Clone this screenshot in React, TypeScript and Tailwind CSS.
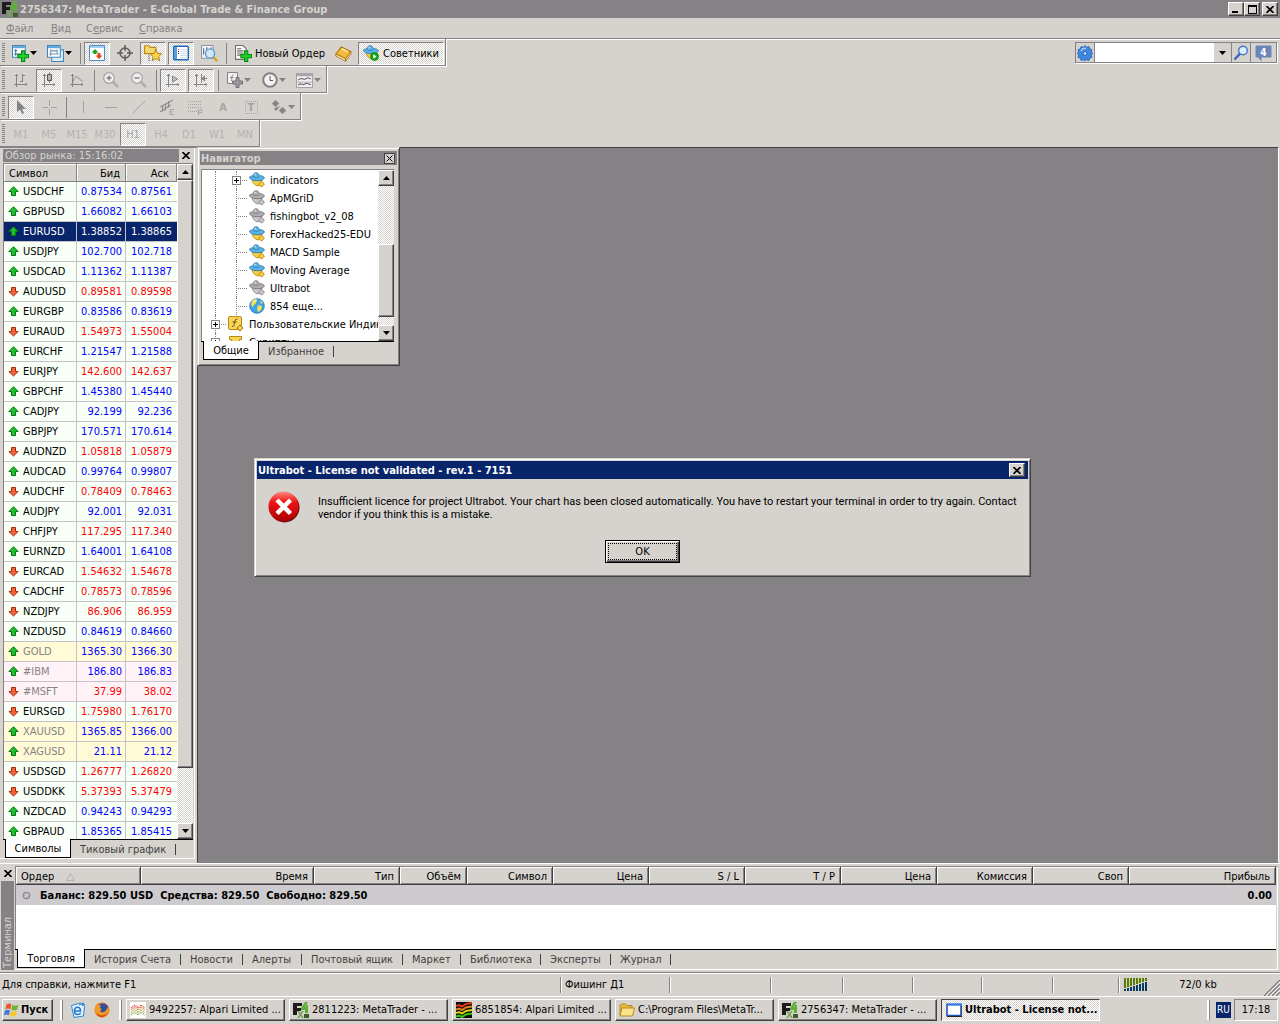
import type { ReactNode } from "react";

const CHECKER = "bg-[repeating-conic-gradient(#ffffff_0_25%,#d6d3ce_0_50%)] bg-[length:2px_2px]";
const RAISED =
  "bg-[#d6d3ce] border border-t-white border-l-white border-r-[#424142] border-b-[#424142] shadow-[inset_-1px_-1px_0_#848284]";

type Quote = { symbol: string; bid: string; ask: string; up: boolean; kind?: "metal" | "stock" };

const QUOTES: Quote[] = [
  { symbol: "USDCHF", bid: "0.87534", ask: "0.87561", up: true },
  { symbol: "GBPUSD", bid: "1.66082", ask: "1.66103", up: true },
  { symbol: "EURUSD", bid: "1.38852", ask: "1.38865", up: true },
  { symbol: "USDJPY", bid: "102.700", ask: "102.718", up: true },
  { symbol: "USDCAD", bid: "1.11362", ask: "1.11387", up: true },
  { symbol: "AUDUSD", bid: "0.89581", ask: "0.89598", up: false },
  { symbol: "EURGBP", bid: "0.83586", ask: "0.83619", up: true },
  { symbol: "EURAUD", bid: "1.54973", ask: "1.55004", up: false },
  { symbol: "EURCHF", bid: "1.21547", ask: "1.21588", up: true },
  { symbol: "EURJPY", bid: "142.600", ask: "142.637", up: false },
  { symbol: "GBPCHF", bid: "1.45380", ask: "1.45440", up: true },
  { symbol: "CADJPY", bid: "92.199", ask: "92.236", up: true },
  { symbol: "GBPJPY", bid: "170.571", ask: "170.614", up: true },
  { symbol: "AUDNZD", bid: "1.05818", ask: "1.05879", up: false },
  { symbol: "AUDCAD", bid: "0.99764", ask: "0.99807", up: true },
  { symbol: "AUDCHF", bid: "0.78409", ask: "0.78463", up: false },
  { symbol: "AUDJPY", bid: "92.001", ask: "92.031", up: true },
  { symbol: "CHFJPY", bid: "117.295", ask: "117.340", up: false },
  { symbol: "EURNZD", bid: "1.64001", ask: "1.64108", up: true },
  { symbol: "EURCAD", bid: "1.54632", ask: "1.54678", up: false },
  { symbol: "CADCHF", bid: "0.78573", ask: "0.78596", up: false },
  { symbol: "NZDJPY", bid: "86.906", ask: "86.959", up: false },
  { symbol: "NZDUSD", bid: "0.84619", ask: "0.84660", up: true },
  { symbol: "GOLD", bid: "1365.30", ask: "1366.30", up: true, kind: "metal" },
  { symbol: "#IBM", bid: "186.80", ask: "186.83", up: true, kind: "stock" },
  { symbol: "#MSFT", bid: "37.99", ask: "38.02", up: false, kind: "stock" },
  { symbol: "EURSGD", bid: "1.75980", ask: "1.76170", up: false },
  { symbol: "XAUUSD", bid: "1365.85", ask: "1366.00", up: true, kind: "metal" },
  { symbol: "XAGUSD", bid: "21.11", ask: "21.12", up: true, kind: "metal" },
  { symbol: "USDSGD", bid: "1.26777", ask: "1.26820", up: false },
  { symbol: "USDDKK", bid: "5.37393", ask: "5.37479", up: false },
  { symbol: "NZDCAD", bid: "0.94243", ask: "0.94293", up: true },
  { symbol: "GBPAUD", bid: "1.85365", ask: "1.85415", up: true },
];

const EXPERTS = [
  { name: "indicators", on: true },
  { name: "ApMGriD", on: false },
  { name: "fishingbot_v2_08", on: false },
  { name: "ForexHacked25-EDU", on: true },
  { name: "MACD Sample", on: true },
  { name: "Moving Average", on: true },
  { name: "Ultrabot", on: false },
];

const ORDER_COLUMNS = [
  { label: "Время", width: "w-[173px]" },
  { label: "Тип", width: "w-[86px]" },
  { label: "Объём", width: "w-[67px]" },
  { label: "Символ", width: "w-[86px]" },
  { label: "Цена", width: "w-[96px]" },
  { label: "S / L", width: "w-[96px]" },
  { label: "T / P", width: "w-[96px]" },
  { label: "Цена", width: "w-[96px]" },
  { label: "Комиссия", width: "w-[96px]" },
  { label: "Своп", width: "w-[96px]" },
  { label: "Прибыль", width: "" },
];

const TERMINAL_TABS = [
  { label: "История Счета", width: "w-[96px]" },
  { label: "Новости", width: "w-[62px]" },
  { label: "Алерты", width: "w-[59px]" },
  { label: "Почтовый ящик", width: "w-[101px]" },
  { label: "Маркет", width: "w-[58px]" },
  { label: "Библиотека", width: "w-[80px]" },
  { label: "Эксперты", width: "w-[70px]" },
  { label: "Журнал", width: "w-[60px]" },
];

/* ---------- icons ---------- */

function Icon({ children, size = 16 }: { children: ReactNode; size?: number }) {
  return (
    <svg width={size} height={size} viewBox="0 0 16 16" fill="none" className="shrink-0" aria-hidden="true">
      {children}
    </svg>
  );
}

function Plus({ color = "#1ed02a", edge = "#078a10" }: { color?: string; edge?: string }) {
  return <path d="M9 5.500h3v3.500h3.500v3H12v3.500H9V12H5.500V9H9z" fill={color} stroke={edge} />;
}

function NewChartIcon() {
  return (
    <Icon size={17}>
      <path d="M.5.5h12v11H.5z" fill="#fff" stroke="#3d86bd" />
      <path d="M1 1h11v2H1z" fill="#5fa8dc" />
      <path d="M3.500 4.500V10M2 8.500h8M2.500 5.500l1-1 1 1" stroke="#41719c" />
      <Plus />
    </Icon>
  );
}

function ProfilesIcon() {
  return (
    <Icon size={17}>
      <path d="M4.500 4.500h11v11h-11z" fill="#d9ecfa" stroke="#3d86bd" />
      <path d="M.5.5h12v11H.5z" fill="#fff" stroke="#3d86bd" />
      <path d="M1 1h11v2H1z" fill="#5fa8dc" />
      <path d="M3.500 4v6M2 8.500h9M9.500 4v4M3 5.500h7" stroke="#6f93b5" />
    </Icon>
  );
}

function MarketWatchIcon() {
  return (
    <Icon>
      <path d="M.5.5h15v15H.5z" fill="#fff" stroke="#4a90d0" />
      <path d="M1 1h14v2H1z" fill="#a5cff0" />
      <path d="M6 4l3.500 3.500h-2V9h-3V7.500h-2z" fill="#19a319" />
      <path d="M10 14l3.500-3.500h-2V8h-3v2.500h-2z" fill="#e04a1a" />
    </Icon>
  );
}

function CrosshairIcon() {
  return (
    <Icon>
      <circle cx="8" cy="8" r="5" stroke="#5c5c5c" strokeWidth="1.500" />
      <path d="M8 0v6M8 10v6M0 8h6M10 8h6" stroke="#5c5c5c" strokeWidth="1.500" />
    </Icon>
  );
}

function StarFolderIcon() {
  return (
    <Icon size={18}>
      <path d="M.5 8.500v-7h4l1 1.500h5v5.500z" fill="#f7d96b" stroke="#b98a16" />
      <path d="M4.500 10v5" stroke="#555" strokeDasharray="1 1" />
      <path d="M10.500 5l1.600 3.400 3.600.3-2.700 2.500.9 3.700-3.400-2-3.200 2 .8-3.700-2.700-2.500 3.600-.3z" fill="#ffd64a" stroke="#a9770b" strokeWidth=".8" />
    </Icon>
  );
}

function TerminalIcon() {
  return (
    <Icon>
      <rect x=".7" y="1.200" width="14.600" height="13.600" rx="1" fill="#fff" stroke="#1d66b8" strokeWidth="1.400" />
      <path d="M1 2h3v12H1z" fill="#5b9cdf" />
      <path d="M7 4.500h7M7 6.500h7M7 8.500h7M7 10.500h7M7 12.500h7" stroke="#cfdbe8" />
      <path d="M5 4h1v1H5z" fill="#e01818" />
      <path d="M5 6h1v1H5zM5 8h1v1H5z" fill="#222" />
    </Icon>
  );
}

function TesterIcon() {
  return (
    <Icon size={17}>
      <path d="M.5.5h11v12H.5z" fill="#f4f6f8" stroke="#8a97a5" />
      <path d="M2.500 3v6M5.500 2v5M9.500 2v3" stroke="#51606f" />
      <circle cx="8.500" cy="8" r="4.300" fill="#cfe6f8" stroke="#5a9bd5" strokeWidth="1.300" />
      <path d="M11.800 11.500l3.500 3.800" stroke="#d9a21f" strokeWidth="2.400" />
    </Icon>
  );
}

function NewOrderIcon() {
  return (
    <Icon size={17}>
      <path d="M.5.5h7l3 3v10H.5z" fill="#fff" stroke="#6c6c6c" />
      <path d="M2 3.500h4M2 5.500h6M2 7.500h6M2 9.500h4" stroke="#666" />
      <Plus />
    </Icon>
  );
}

function BookIcon() {
  return (
    <Icon size={17}>
      <path d="M.8 8.500L6 1.800l9 4.500-5 6.700z" fill="#f4bb3c" stroke="#a96f08" />
      <path d="M.8 8.500v2L10 15.200V13zM10 15.200l5-6.500V6.300L10 13z" fill="#fff0c4" stroke="#a96f08" strokeWidth=".8" />
      <path d="M6.500 3.500l5.500 2.800" stroke="#ffe7a0" strokeWidth="1.500" />
    </Icon>
  );
}

function HatIcon({ on = true, badge = false }: { on?: boolean; badge?: boolean }) {
  const hat = on ? "#5db4e4" : "#b0aeb0";
  const hatEdge = on ? "#2878ae" : "#737173";
  const face = on ? "#f7cf45" : "#c9c7c9";
  const faceEdge = on ? "#b88410" : "#848284";
  return (
    <Icon>
      <path d="M3 7.500l10 .5c0 3-1.500 5.500-4 6C6 13.500 3.500 11 3 7.500z" fill={face} stroke={faceEdge} strokeWidth=".8" />
      <path d="M.5 5c1.500-1.200 3-1 3.500-1 .3-2 1.300-3.200 3-3.200s2.900 1 3.200 2.900c2.300 0 4.800.5 5.200 2.300-1 2-3.900 2.700-6.900 2.700C5 8.700 1 8 .5 5z" fill={hat} stroke={hatEdge} strokeWidth=".9" />
      <path d="M4 4.500c1.500 1.500 5 1.500 6.200 0" stroke={hatEdge} strokeWidth=".8" />
      <path d="M5.500 3.300c.2-.8.7-1.200 1.500-1.300" stroke="#fff" strokeOpacity=".8" />
      {badge ? (
        <>
          <circle cx="11.500" cy="11.500" r="4" fill="#18a818" stroke="#087808" strokeWidth=".7" />
          <path d="M10.300 9.300l3.200 2.200-3.200 2.200z" fill="#fff" />
        </>
      ) : (
        <path d="M12.500 9.300l2.900 2.900-2.900 2.900-2.900-2.900z" fill={face} stroke={faceEdge} />
      )}
    </Icon>
  );
}

const GRAY = "#848284";
const PALE = "#a5a2a5";

function AxesIcon({ kind }: { kind: "bars" | "candle" | "line" | "scroll" | "shift" }) {
  return (
    <Icon>
      <path d="M3.500 2v13M1 12.500h13M2 3.500h3M13 11v3" stroke={GRAY} />
      {kind === "bars" && <path d="M9.500 2v8M7 9.500h2M10 3.500h2" stroke={GRAY} />}
      {kind === "candle" && (
        <>
          <path d="M8.500 0v11" stroke={GRAY} />
          <path d="M6.500 2.500h4v6h-4z" fill="#b5b2b5" stroke="#5a5a5a" />
        </>
      )}
      {kind === "line" && <path d="M4 9.500C6 4 8 4 9.500 6s2.500 2 4 3" stroke={GRAY} />}
      {kind === "scroll" && <path d="M7.500 4v6l5-3z" fill="#c6c3c6" stroke={GRAY} />}
      {kind === "shift" && <path d="M8.500 2v9M14 6.500H9M11.500 4L9 6.500 11.500 9z" fill={GRAY} stroke={GRAY} />}
    </Icon>
  );
}

function ZoomIcon({ plus = false }: { plus?: boolean }) {
  return (
    <Icon>
      <circle cx="6" cy="6" r="5.300" fill="#f0eff0" stroke="#a5a2a5" strokeWidth="1.200" />
      <path d="M10 10l5 5" stroke="#b0aeb0" strokeWidth="2.600" />
      <path d={plus ? "M3.500 6h5M6 3.500v5" : "M3.500 6h5"} stroke="#7b797b" strokeWidth="1.400" />
    </Icon>
  );
}

function IndicatorsIcon() {
  return (
    <Icon>
      <path d="M.5.5h10v11H.5z" fill="#f1f0f1" stroke={GRAY} />
      <path d="M6.500 3C4.500 3 5 5 4.500 9M3 5.500h3.500" stroke={GRAY} />
      <Plus color="#9c9a9c" edge="#737173" />
    </Icon>
  );
}

function ClockIcon() {
  return (
    <Icon>
      <circle cx="8" cy="8" r="6.800" fill="#f3f2f3" stroke={GRAY} strokeWidth="2" />
      <path d="M8 4v4.500h3" stroke="#5a5a5a" />
    </Icon>
  );
}

function TemplateIcon() {
  return (
    <Icon size={17}>
      <path d="M.5 1.500h15v13H.5z" fill="#f1f0f1" stroke={PALE} />
      <path d="M1 2h14v2H1z" fill="#a5a2a5" />
      <path d="M2 7.500l3-1.500 3 1 3-1.500 3 1M2 12.500L4 11l3 1 3-1.500 4 1.500" stroke="#6b696b" />
      <path d="M1 9.500h14" stroke="#b5b2b5" />
    </Icon>
  );
}

function DrawIcon({ kind }: { kind: string }) {
  return (
    <Icon>
      {kind === "cursor" && <path d="M4 1v12l3-2.500L9 15l2-1-2-4h4z" fill={GRAY} />}
      {kind === "cross" && <path d="M8.500 1v6M8.500 10v6M1 8.500h6M10 8.500h6" stroke={PALE} />}
      {kind === "vline" && <path d="M8.500 2v12" stroke={PALE} />}
      {kind === "hline" && <path d="M2 8.500h12" stroke={PALE} />}
      {kind === "trend" && <path d="M2 14L14 2" stroke={PALE} />}
      {kind === "channel" && (
        <>
          <path d="M1 8L14 1M1 13l11-7M4 6l-1 7M7 4l-1 8M10 2L9 9" stroke={GRAY} />
          <path d="M15 10.500h-4v5h4M11 13h3" stroke={PALE} />
        </>
      )}
      {kind === "fibo" && (
        <>
          <path d="M1 2.500h14M1 5.500h14M1 8.500h14M1 12.500h9" stroke={PALE} strokeDasharray="1 1" />
          <path d="M11.500 16v-5H16M12 13.500h3" stroke={PALE} />
        </>
      )}
      {kind === "arrows" && (
        <path d="M4.500 1L8 4.500 4.500 8 1 4.500zM11.500 8l3.500 3.500-3.500 3.500L8 11.500zM3 9.500L5 12l4-5" fill={GRAY} stroke={PALE} strokeWidth=".7" />
      )}
    </Icon>
  );
}

function QuoteArrow({ up }: { up: boolean }) {
  return (
    <svg width="11" height="11" viewBox="0 0 11 11" className="shrink-0" aria-hidden="true">
      {up ? (
        <path d="M5.500.7l4.600 4.800H7.500v4h-4v-4H.9z" fill="#1fc02f" stroke="#08750f" />
      ) : (
        <path d="M5.500 10l4.600-4.500H7.500v-4h-4v4H.9z" fill="#f2633a" stroke="#a92a08" />
      )}
    </svg>
  );
}

function TerminalLogo() {
  return (
    <svg width="16" height="16" viewBox="0 0 16 16" className="shrink-0" aria-hidden="true">
      <path d="M0 1h9v3H4v2h4v3H4v4H0z" fill="#1c1c1c" />
      <path d="M12 0h3l-3 5h1V3h2v8h-3V8H8V6z" fill="#5fae35" />
      <path d="M4 9h2l1.500 2L9 9h2l-2.500 3.500L11 16H9l-1.500-2L6 16H4l2.500-3.500z" fill="#79a55c" />
      <path d="M11 12h5v4h-5z" fill="#3f5c2c" />
    </svg>
  );
}

function GearIcon() {
  return (
    <Icon>
      <path
        d="M8 .6l1.700 1.600 2.300-.6.7 2.300 2.300.7-.6 2.300L16 8.500l-1.600 1.700.6 2.300-2.300.6-.7 2.300-2.300-.6L8 16l-1.700-1.200-2.300.6-.7-2.300-2.300-.6.6-2.300L0 8.500l1.600-1.600L1 4.600l2.300-.7.7-2.300 2.300.6z"
        fill="#3f87de"
        stroke="#2462b4"
        strokeWidth=".8"
        strokeLinejoin="round"
      />
      <path d="M4 6c1-2 3-3 5-2.500" stroke="#a8d0f8" strokeWidth="1.500" />
      <circle cx="8" cy="8.500" r="1.900" fill="#cfe4fa" stroke="#1f5cb0" />
    </Icon>
  );
}

function SearchIcon() {
  return (
    <Icon>
      <circle cx="10" cy="5.500" r="4.300" fill="#dcecfb" stroke="#4a78c8" strokeWidth="1.400" />
      <path d="M7 8.700l-5.500 5.800" stroke="#3a66c0" strokeWidth="2.400" />
    </Icon>
  );
}

function MessagesIcon() {
  return (
    <svg width="17" height="16" viewBox="0 0 17 16" aria-hidden="true">
      <path d="M1 1h15v11H6v3.500L3.500 12H1z" fill="#6b86b8" stroke="#6b86b8" strokeLinejoin="round" />
      <text x="8.500" y="10.500" textAnchor="middle" fontSize="10" fontWeight="bold" fill="#fff">
        4
      </text>
    </svg>
  );
}

function GlobeIcon() {
  return (
    <Icon>
      <circle cx="8" cy="8" r="7.300" fill="#3fa3ea" stroke="#1d74b8" strokeWidth=".8" />
      <path d="M3 3c2-2 4-2 5-1L7 5 5 7 4 9 2 7zM9 7l4 1-1 4-3 2-1-3zM11 2l3 3-2 1z" fill="#f5e04e" />
      <path d="M4 4c1-1.500 2.500-2 4-2" stroke="#fff" strokeOpacity=".7" />
    </Icon>
  );
}

function FunctionIcon() {
  return (
    <Icon>
      <rect x=".5" y=".5" width="13" height="13" rx="1.500" fill="#f8d45a" stroke="#b88a18" />
      <path d="M9.500 3C7 2.500 7 5 6.500 7S6 11 4 10.500M4.500 6h4" stroke="#6b4a00" />
      <path d="M12 9l3 3-3 3-3-3z" fill="#f7cf45" stroke="#a97508" />
    </Icon>
  );
}

function ScrollIcon() {
  return (
    <Icon>
      <path d="M1.500 2.500h12v3h-2v9h-8v-9h-2z" fill="#f8d45a" stroke="#b88a18" />
      <path d="M5 7.500h5M5 9.500h5" stroke="#b88a18" />
    </Icon>
  );
}

function ErrorIcon() {
  return (
    <svg width="32" height="32" viewBox="0 0 32 32" className="shrink-0" aria-hidden="true">
      <defs>
        <linearGradient id="err" x1="0" y1="0" x2="0" y2="1">
          <stop offset="0" stopColor="#ff8a84" />
          <stop offset=".35" stopColor="#f01414" />
          <stop offset="1" stopColor="#a80000" />
        </linearGradient>
      </defs>
      <circle cx="16.500" cy="16.500" r="15" fill="#6b1010" />
      <circle cx="15.500" cy="15.500" r="15" fill="url(#err)" />
      <path d="M9 9l13.500 13.500M22.500 9L9 22.500" stroke="#fff" strokeWidth="4.500" />
    </svg>
  );
}

function StartIcon() {
  return (
    <Icon>
      <path d="M2.500 2.500c2-1.500 3.500-1.300 5 0L6.300 7.300c-1.500-1-3-1-5 0z" fill="#e8562a" />
      <path d="M8.500 3c2 1.200 4 1 6-.2l-1.300 4.800c-2 1.200-4 1.200-6 .2z" fill="#6fb52c" />
      <path d="M1 8.500c2-1 3.500-1 5 0l-1.200 4.800c-1.500-1-3-1-5 0z" fill="#3f78d8" />
      <path d="M7 9c2 1 4 1 6 0l-1.300 4.800c-2 1.200-4 1-6 0z" fill="#f7c52c" />
    </Icon>
  );
}

function BrowserIcon() {
  return (
    <Icon>
      <path d="M1.500 3.500l9-2.500 4 3-1 10L4 15.500z" fill="#e8f4ff" stroke="#2d84d0" />
      <path d="M4.500 9h6c0-2.500-1-3.700-3-3.700S4.500 7 4.500 9s1.300 3.500 3.200 3.500 2.600-.8 3-1.700" stroke="#1f78d0" strokeWidth="1.600" />
      <path d="M9 3l5-2M12 4l3-2" stroke="#1f78d0" />
    </Icon>
  );
}

function FirefoxIcon() {
  return (
    <Icon>
      <circle cx="8" cy="8" r="7.500" fill="#e8741a" />
      <circle cx="9" cy="6.500" r="5" fill="#2b4fa3" />
      <path d="M1 5c1-2 1.500-3 2.500-4l.5 2c1 0 2 .3 3 1L5.500 6 8 7 6 9c1.500 2 5 1.500 6.500-1.500L14 5c2 4-.5 10-6 10.500C3 15.500 0 10 1 5z" fill="#f39a22" />
      <path d="M2 10c2 4 7 5 11 1-2 5-9 6-11-1z" fill="#c93c10" />
    </Icon>
  );
}

function WaveIcon({ dark = false }: { dark?: boolean }) {
  return (
    <Icon>
      <path d="M0 0h16v16H0z" fill={dark ? "#0a0a0a" : "#fff"} />
      <g strokeWidth={dark ? "2" : "1.500"} strokeDasharray={dark ? undefined : "1 1"}>
        <path d={dark ? "M0 4l3-1 3 1.500L10 2l6-1" : "M1 6l4-3 3 3 3-3 4 3"} stroke={dark ? "#e03818" : "#d84a40"} />
        <path d={dark ? "M0 7.500l3-1L6 8l4-2.500 6-1" : "M1 8l4-3 3 3 3-3 4 3"} stroke={dark ? "#e08018" : "#d88040"} />
        <path d={dark ? "M0 11l3-1 3 1.500L10 9l6-1" : "M1 10.500l4-3 3 3 3-3 4 3"} stroke={dark ? "#d8d018" : "#a8a848"} />
        <path d={dark ? "M0 14.500l3-1L6 15l4-2.500 6-1" : "M1 13l4-3 3 3 3-3 4 3"} stroke={dark ? "#40c818" : "#78a848"} />
      </g>
    </Icon>
  );
}

function FolderIcon() {
  return (
    <Icon>
      <path d="M1 13V3.500L2.500 2h4L8 3.500h5V13z" fill="#e8b93c" stroke="#b8881c" />
      <path d="M1 14l2-8h12.500l-2 8z" fill="#fbe58a" stroke="#b8881c" />
    </Icon>
  );
}

function WindowIcon() {
  return (
    <Icon>
      <path d="M1 2.500h14v11H1z" fill="#fff" stroke="#1d58b8" strokeWidth="1.600" />
      <path d="M0 1.500h16v2H0z" fill="#2d7be0" />
      <path d="M1 14.500h15V4" stroke="#222" />
    </Icon>
  );
}

/* ---------- shared controls ---------- */

function Caret({ up = false, color = "#000000" }: { up?: boolean; color?: string }) {
  return (
    <svg width="7" height="4" viewBox="0 0 7 4" className="shrink-0" aria-hidden="true">
      <path d={up ? "M0 4h7L3.500 0z" : "M0 0h7L3.500 4z"} fill={color} />
    </svg>
  );
}

function CloseGlyph() {
  return (
    <svg width="8" height="7" viewBox="0 0 8 7" className="shrink-0" aria-hidden="true">
      <path d="M.5 0l7 7M7.500 0l-7 7" stroke="#000" strokeWidth="1.600" />
    </svg>
  );
}

function Toolbar({ width, children }: { width: string; children: ReactNode }) {
  return (
    <div
      role="toolbar"
      className={`flex h-[27px] items-center gap-0.5 border-r border-b border-[#848284] pt-0.5 pl-0.5 shadow-[1px_1px_0_#fff] ${width}`}
    >
      <span className="mr-px h-5 w-[3px] shrink-0 bg-[repeating-linear-gradient(#848284_0_1px,transparent_1px_2px)]" />
      {children}
    </div>
  );
}

function Tool({ label, pressed, children }: { label: string; pressed?: boolean; children: ReactNode }) {
  return (
    <button
      type="button"
      aria-label={label}
      className={`flex h-[23px] w-[26px] shrink-0 items-center justify-center border ${
        pressed ? `border-t-[#848284] border-r-white border-b-white border-l-[#848284] ${CHECKER}` : "border-transparent"
      }`}
    >
      {children}
    </button>
  );
}

function DropTool({ label, caret, children }: { label: string; caret?: string; children: ReactNode }) {
  return (
    <button type="button" aria-label={label} className="flex h-[23px] w-[33px] shrink-0 items-center justify-end gap-px pr-1">
      {children}
      <Caret color={caret} />
    </button>
  );
}

function ToolSeparator() {
  return (
    <span className="flex h-[21px] w-1 shrink-0 justify-center">
      <span className="w-px bg-[#848284]" />
    </span>
  );
}

function ScrollBar({ thumb }: { thumb: string }) {
  return (
    <div className={`flex w-4 shrink-0 flex-col ${CHECKER}`}>
      <button type="button" aria-label="Вверх" className={`flex h-4 shrink-0 items-center justify-center ${RAISED}`}>
        <Caret up />
      </button>
      <div className="flex min-h-0 flex-1 flex-col">
        <div className={`${thumb} ${RAISED}`} />
      </div>
      <button type="button" aria-label="Вниз" className={`flex h-4 shrink-0 items-center justify-center ${RAISED}`}>
        <Caret />
      </button>
    </div>
  );
}

function Tabs({ active, width, children }: { active: string; width: string; children: ReactNode }) {
  return (
    <div className="flex h-[19px] shrink-0 border-t border-black pl-0.5 text-[#424142]">
      <button type="button" className={`-mt-px border border-t-0 border-black bg-white text-black ${width}`}>
        {active}
      </button>
      {children}
    </div>
  );
}

function Tab({ label, width }: { label: string; width: string }) {
  return (
    <button type="button" className={`flex shrink-0 items-center justify-between pl-[9px] whitespace-nowrap ${width}`}>
      {label}
      <span className="h-[11px] w-px bg-[#424142]" />
    </button>
  );
}

/* ---------- window parts ---------- */

function TitleBar() {
  return (
    <header className="flex h-[18px] shrink-0 items-center gap-0.5 bg-[#848284] pr-0.5 pl-0.5 text-[#d6d3ce]">
      <TerminalLogo />
      <h1 className="flex-1 font-bold">2756347: MetaTrader - E-Global Trade &amp; Finance Group</h1>
      <div className="flex">
        <button type="button" aria-label="Свернуть" className={`flex h-3.5 w-4 items-end pb-0.5 pl-[3px] ${RAISED}`}>
          <span className="h-0.5 w-1.5 bg-black" />
        </button>
        <button type="button" aria-label="Развернуть" className={`flex h-3.5 w-4 items-center justify-center ${RAISED}`}>
          <span className="h-[9px] w-[9px] border border-t-2 border-black" />
        </button>
        <button type="button" aria-label="Закрыть" className={`ml-0.5 flex h-3.5 w-4 items-center justify-center ${RAISED}`}>
          <CloseGlyph />
        </button>
      </div>
    </header>
  );
}

function MenuBar() {
  return (
    <nav className="flex h-[21px] shrink-0 items-center border-b border-[#848284] pl-1.5 text-[#848284] shadow-[0_1px_0_#fff]">
      <button type="button" className="w-[45px] text-left"><u>Ф</u>айл</button>
      <button type="button" className="w-[35px] text-left"><u>В</u>ид</button>
      <button type="button" className="w-[53px] text-left">С<u>е</u>рвис</button>
      <button type="button" className="text-left"><u>С</u>правка</button>
    </nav>
  );
}

function Toolbars() {
  return (
    <div className="flex shrink-0 items-start justify-between">
      <div>
        <Toolbar width="w-[446px]">
          <DropTool label="Новый график"><NewChartIcon /></DropTool>
          <DropTool label="Профили"><ProfilesIcon /></DropTool>
          <ToolSeparator />
          <Tool label="Обзор рынка" pressed><MarketWatchIcon /></Tool>
          <Tool label="Окно данных"><CrosshairIcon /></Tool>
          <Tool label="Навигатор" pressed><StarFolderIcon /></Tool>
          <Tool label="Терминал" pressed><TerminalIcon /></Tool>
          <Tool label="Тестер"><TesterIcon /></Tool>
          <ToolSeparator />
          <button type="button" className="flex h-[23px] w-[98px] shrink-0 items-center gap-[3px] pl-[5px] whitespace-nowrap">
            <NewOrderIcon />
            Новый Ордер
          </button>
          <Tool label="MetaEditor"><BookIcon /></Tool>
          <button
            type="button"
            aria-pressed="true"
            className={`flex h-[23px] w-[86px] shrink-0 items-center gap-1 border border-t-[#848284] border-r-white border-b-white border-l-[#848284] pl-1 ${CHECKER}`}
          >
            <HatIcon badge />
            Советники
          </button>
        </Toolbar>
        <Toolbar width="w-[327px]">
          <Tool label="Бары"><AxesIcon kind="bars" /></Tool>
          <Tool label="Свечи" pressed><AxesIcon kind="candle" /></Tool>
          <Tool label="Линия"><AxesIcon kind="line" /></Tool>
          <ToolSeparator />
          <Tool label="Увеличить"><ZoomIcon plus /></Tool>
          <Tool label="Уменьшить"><ZoomIcon /></Tool>
          <ToolSeparator />
          <Tool label="Автопрокрутка" pressed><AxesIcon kind="scroll" /></Tool>
          <Tool label="Сдвиг графика" pressed><AxesIcon kind="shift" /></Tool>
          <ToolSeparator />
          <DropTool label="Индикаторы" caret="#848284"><IndicatorsIcon /></DropTool>
          <DropTool label="Периоды" caret="#848284"><ClockIcon /></DropTool>
          <DropTool label="Шаблоны" caret="#848284"><TemplateIcon /></DropTool>
        </Toolbar>
        <Toolbar width="w-[301px]">
          <Tool label="Курсор" pressed><DrawIcon kind="cursor" /></Tool>
          <Tool label="Перекрестие"><DrawIcon kind="cross" /></Tool>
          <ToolSeparator />
          <Tool label="Вертикальная линия"><DrawIcon kind="vline" /></Tool>
          <Tool label="Горизонтальная линия"><DrawIcon kind="hline" /></Tool>
          <Tool label="Трендовая линия"><DrawIcon kind="trend" /></Tool>
          <Tool label="Канал"><DrawIcon kind="channel" /></Tool>
          <Tool label="Фибоначчи"><DrawIcon kind="fibo" /></Tool>
          <Tool label="Текст"><span className="font-bold text-[#a5a2a5]">A</span></Tool>
          <Tool label="Метка">
            <span className="flex h-[13px] w-[13px] items-center justify-center border border-dotted border-[#a5a2a5] font-bold text-[#a5a2a5]">T</span>
          </Tool>
          <DropTool label="Стрелки" caret="#848284"><DrawIcon kind="arrows" /></DropTool>
        </Toolbar>
        <Toolbar width="w-[260px]">
          {["M1", "M5", "M15", "M30", "H1", "H4", "D1", "W1", "MN"].map((period) => (
            <Tool key={period} label={period} pressed={period === "H1"}>
              <span className={period === "H1" ? "text-[#a5a2a5]" : "text-[#b5b2b5]"}>{period}</span>
            </Tool>
          ))}
        </Toolbar>
      </div>
      <div className="mt-[3px] mr-[3px] flex h-[21px] border border-[#848284] shadow-[1px_1px_0_#fff]">
        <button type="button" aria-label="Настройки" className="flex w-[19px] items-center justify-center border-r border-[#848284]">
          <GearIcon />
        </button>
        <input aria-label="Поиск" className="w-[119px] bg-white px-1 outline-none" />
        <button type="button" aria-label="История поиска" className="flex w-[18px] items-center justify-center border-r border-[#848284]">
          <Caret />
        </button>
        <button type="button" aria-label="Найти" className="flex w-[19px] items-center justify-center border-r border-[#848284]">
          <SearchIcon />
        </button>
        <button type="button" aria-label="Сообщения" className="flex w-[25px] items-center justify-center">
          <MessagesIcon />
        </button>
      </div>
    </div>
  );
}

function QuoteRow({ quote, selected }: { quote: Quote; selected: boolean }) {
  const price = selected ? "text-white" : quote.up ? "text-[#0000ff]" : "text-[#ff0000]";
  const tint = selected
    ? "bg-[#08246b] text-white"
    : quote.kind === "metal"
      ? "bg-[#fffbd6] text-[#848284]"
      : quote.kind === "stock"
        ? "bg-[#fff3f7] text-[#848284]"
        : "bg-[#f7fff7] text-black";
  return (
    <tr className={`h-5 ${tint}`}>
      <td className="border-r border-b border-[#c6c3c6] p-0 pl-1">
        <span className="flex items-center gap-1">
          <QuoteArrow up={quote.up} />
          {quote.symbol}
        </span>
      </td>
      <td className={`border-r border-b border-[#c6c3c6] p-0 pr-[3px] text-right ${price}`}>{quote.bid}</td>
      <td className={`border-b border-[#c6c3c6] p-0 pr-[5px] text-right ${price}`}>{quote.ask}</td>
    </tr>
  );
}

function MarketWatch() {
  const head = "border-r border-b border-[#848284] p-0 font-normal shadow-[inset_1px_1px_0_#fff]";
  return (
    <aside className="flex w-[197px] shrink-0 flex-col border-t border-[#848284] pr-0.5 pb-1">
      <div className="flex min-h-0 flex-1 flex-col border-r border-b border-white pr-px pl-[3px]">
        <div className="flex h-[15px] shrink-0 items-center">
          <h2 className="h-[13px] w-[176px] bg-[#848284] pl-0.5 text-[#d6d3ce]">Обзор рынка: 15:16:02</h2>
          <button type="button" aria-label="Закрыть" className="flex flex-1 justify-center">
            <CloseGlyph />
          </button>
        </div>
        <div className="flex min-h-0 flex-1 overflow-hidden border-t border-l border-[#848284]">
          <div className="flex-1 overflow-hidden">
            <table className="w-full table-fixed border-separate border-spacing-0">
              <thead>
                <tr className="h-[18px]">
                  <th className={`w-[73px] pt-0.5 pl-[5px] text-left ${head}`}>Символ</th>
                  <th className={`w-[49px] pt-0.5 pr-[5px] text-right ${head}`}>Бид</th>
                  <th className={`pt-0.5 pr-[7px] text-right ${head}`}>Аск</th>
                </tr>
              </thead>
              <tbody>
                {QUOTES.map((quote) => (
                  <QuoteRow key={quote.symbol} quote={quote} selected={quote.symbol === "EURUSD"} />
                ))}
              </tbody>
            </table>
          </div>
          <ScrollBar thumb="h-[588px]" />
        </div>
        <Tabs active="Символы" width="w-[66px]">
          <Tab label="Тиковый график" width="w-[105px]" />
        </Tabs>
      </div>
    </aside>
  );
}

function TreeGuide({ branch, expander }: { branch?: boolean; expander?: boolean }) {
  return (
    <span className="relative h-full w-[21px] shrink-0">
      <span className="absolute inset-y-0 left-[10px] border-l border-dotted border-[#848284]" />
      {branch && <span className="absolute top-[9px] right-0 left-[10px] border-t border-dotted border-[#848284]" />}
      {expander && (
        <span className="absolute top-[5px] left-1.5 flex h-[9px] w-[9px] items-center justify-center border border-[#848284] bg-white">
          <svg width="5" height="5" viewBox="0 0 5 5" aria-hidden="true">
            <path d="M0 2.500h5M2.500 0v5" stroke="#000" />
          </svg>
        </span>
      )}
    </span>
  );
}

function Navigator() {
  return (
    <section className="absolute -top-px -left-px flex h-[219px] w-[203px] flex-col border border-t-[#d6d3ce] border-r-[#424142] border-b-[#424142] border-l-[#d6d3ce] bg-[#d6d3ce] p-0.5 shadow-[inset_1px_1px_0_#fff,inset_-1px_-1px_0_#848284]">
      <div className="mt-px flex h-[14px] shrink-0 items-center bg-[#848284] pr-0.5 pl-px text-[#d6d3ce]">
        <h2 className="flex-1 font-bold">Навигатор</h2>
        <button type="button" aria-label="Закрыть" className="flex h-[11px] w-[11px] items-center justify-center border border-[#424142] bg-[#d6d3ce]">
          <svg width="7" height="7" viewBox="0 0 7 7" aria-hidden="true">
            <path d="M.5.5l6 6M6.500.5l-6 6" stroke="#000" />
          </svg>
        </button>
      </div>
      <div className="mt-1 mr-[3px] ml-px flex min-h-0 flex-1 border-t border-l border-[#848284] bg-white">
        <ul className="flex-1 overflow-hidden pt-px pl-[3px]">
          {EXPERTS.map((expert, i) => (
            <li key={expert.name} className="flex h-[18px] items-center">
              <TreeGuide />
              <TreeGuide branch expander={i === 0} />
              <span className="mr-[5px] ml-0.5"><HatIcon on={expert.on} /></span>
              {expert.name}
            </li>
          ))}
          <li className="flex h-[18px] items-center">
            <TreeGuide />
            <TreeGuide branch />
            <span className="mr-[5px] ml-0.5"><GlobeIcon /></span>
            854 еще...
          </li>
          <li className="flex h-[18px] items-center whitespace-nowrap">
            <TreeGuide branch expander />
            <span className="mr-[5px] ml-0.5"><FunctionIcon /></span>
            Пользовательские Индикаторы
          </li>
          <li className="flex h-[18px] items-center">
            <TreeGuide branch expander />
            <span className="mr-[5px] ml-0.5"><ScrollIcon /></span>
            Скрипты
          </li>
        </ul>
        <ScrollBar thumb="mt-[58px] h-[73px]" />
      </div>
      <div className="mr-[3px] mb-[3px] ml-px">
        <Tabs active="Общие" width="w-[56px]">
          <Tab label="Избранное" width="w-[75px]" />
        </Tabs>
      </div>
    </section>
  );
}

function LicenseDialog() {
  return (
    <div
      role="alertdialog"
      aria-labelledby="dialog-title"
      className="absolute top-[458px] left-[254px] w-[777px] border border-t-[#d6d3ce] border-r-[#424142] border-b-[#424142] border-l-[#d6d3ce] bg-[#d6d3ce] p-0.5 shadow-[inset_1px_1px_0_#fff,inset_-1px_-1px_0_#848284]"
    >
      <div className="flex h-[18px] items-center bg-[#08246b] pr-[3px] pl-px text-white">
        <h2 id="dialog-title" className="flex-1 font-bold">Ultrabot - License not validated - rev.1 - 7151</h2>
        <button type="button" aria-label="Закрыть" className={`flex h-3.5 w-4 items-center justify-center ${RAISED}`}>
          <CloseGlyph />
        </button>
      </div>
      <div className="flex gap-[18px] pt-3 pl-[11px]">
        <ErrorIcon />
        <p className="pt-1 font-[Roboto,sans-serif] whitespace-nowrap">
          Insufficient licence for project Ultrabot. Your chart has been closed automatically. You have to restart your terminal in order to try again. Contact
          <br />
          vendor if you think this is a mistake.
        </p>
      </div>
      <div className="flex justify-center pt-[17px] pb-[11px]">
        <button type="button" className="h-[23px] w-[75px] border border-black bg-[#d6d3ce] p-[2px] shadow-[inset_1px_1px_0_#fff,inset_-1px_-1px_0_#424142,inset_-2px_-2px_0_#848284]">
          <span className="flex h-full items-center justify-center border border-dotted border-black">OK</span>
        </button>
      </div>
    </div>
  );
}

function Terminal() {
  const head =
    "border-r border-b border-[#424142] p-0 font-normal shadow-[inset_1px_1px_0_#fff,inset_-1px_-1px_0_#848284]";
  return (
    <section className="flex h-[109px] shrink-0 border-t border-white pt-0.5 pr-0.5 pb-0.5">
      <div className="flex w-[15px] shrink-0 flex-col items-center gap-1 pt-1">
        <button type="button" aria-label="Закрыть">
          <CloseGlyph />
        </button>
        <h2 className="w-[13px] flex-1 rotate-180 bg-[#848284] pt-0.5 text-[#d6d3ce] [writing-mode:vertical-rl]">
          Терминал
        </h2>
      </div>
      <div className="flex min-w-0 flex-1 flex-col border-t border-r border-b border-t-[#848284] border-r-white border-b-white pr-px pb-px">
        <div className="min-h-0 flex-1 overflow-hidden border-l border-[#848284] bg-white">
          <table className="w-full table-fixed border-separate border-spacing-0">
            <thead className="bg-[#d6d3ce]">
              <tr className="h-[18px]">
                <th className={`w-[125px] pl-[5px] text-left ${head}`}>
                  <span className="flex items-center gap-3 pt-0.5">
                    Ордер
                    <svg width="9" height="8" viewBox="0 0 9 8" aria-hidden="true">
                      <path d="M4.500.5l-4 7h8z" fill="none" stroke="#b5b2b5" />
                    </svg>
                  </span>
                </th>
                {ORDER_COLUMNS.map((column, i) => (
                  <th key={i} className={`pt-0.5 pr-[5px] text-right ${head} ${column.width}`}>{column.label}</th>
                ))}
              </tr>
            </thead>
            <tbody>
              <tr className="h-5 bg-[#cecbce] font-bold">
                <td colSpan={11} className="p-0 pl-1.5">
                  <span className="flex items-center gap-[9px] whitespace-pre">
                    <svg width="9" height="9" viewBox="0 0 9 9" aria-hidden="true">
                      <circle cx="4.500" cy="4.500" r="3.500" fill="#b5b2b5" stroke="#848284" />
                      <path d="M3 6l3-3" stroke="#e7e7e7" />
                    </svg>
                    {"Баланс: 829.50 USD  Средства: 829.50  Свободно: 829.50"}
                  </span>
                </td>
                <td className="p-0 pr-1 text-right">0.00</td>
              </tr>
            </tbody>
          </table>
        </div>
        <Tabs active="Торговля" width="w-[68px]">
          {TERMINAL_TABS.map((tab) => (
            <Tab key={tab.label} label={tab.label} width={tab.width} />
          ))}
        </Tabs>
      </div>
    </section>
  );
}

function StatusBar() {
  const cell = "h-4 border-l border-[#848284] shadow-[inset_1px_0_0_#fff]";
  return (
    <footer className="flex h-6 shrink-0 items-center border-t border-[#848284] shadow-[inset_0_1px_0_#fff]">
      <span className="flex-1 pl-0.5">Для справки, нажмите F1</span>
      <span className={`w-[109px] pl-1 leading-4 ${cell}`}>Фишинг Д1</span>
      <span className={`w-[101px] ${cell}`} />
      <span className={`w-[72px] ${cell}`} />
      <span className={`w-[70px] ${cell}`} />
      <span className={`w-[69px] ${cell}`} />
      <span className={`w-[71px] ${cell}`} />
      <span className={`w-[66px] ${cell}`} />
      <span className={`flex w-[146px] items-center pr-4 pl-[5px] ${cell}`}>
        <svg width="24" height="13" viewBox="0 0 24 13" aria-hidden="true">
          {[0, 1, 2, 3, 4, 5, 6, 7].map((i) => (
            <g key={i}>
              <path d={`M${i * 3} 0h2v${10 - i}h-2z`} fill="#5a7d00" />
              <path d={`M${i * 3} ${11 - i}h2v${i + 2}h-2z`} fill="#083c63" />
            </g>
          ))}
        </svg>
        <span className="flex-1 text-center">72/0 kb</span>
      </span>
      <svg width="16" height="16" viewBox="0 0 16 16" className="self-end" aria-hidden="true">
        <path d="M0 16L16 0M4 16L16 4M8 16l8-8M12 16l4-4" stroke="#848284" strokeWidth="1.500" />
        <path d="M2 16L16 2M6 16L16 6M10 16l6-6" stroke="#fff" />
      </svg>
    </footer>
  );
}

function TaskButton({ icon, label }: { icon: ReactNode; label: string }) {
  return (
    <button type="button" className={`flex h-[22px] w-[159px] shrink-0 items-center gap-[3px] pl-[3px] whitespace-nowrap ${RAISED}`}>
      {icon}
      {label}
    </button>
  );
}

function Taskbar() {
  return (
    <div className="flex h-7 shrink-0 items-center border-t border-white pr-0.5 pb-0.5 pl-0.5">
      <button type="button" className={`flex h-[22px] w-[51px] shrink-0 items-center gap-px pl-px font-bold ${RAISED}`}>
        <StartIcon />
        Пуск
      </button>
      <span className="mx-[7px] h-5 w-[3px] border-r border-[#848284] bg-white" />
      <button type="button" aria-label="Internet Explorer" className="mr-2"><BrowserIcon /></button>
      <button type="button" aria-label="Firefox"><FirefoxIcon /></button>
      <span className="mr-1 ml-[9px] h-5 w-[3px] border-r border-[#848284] bg-white" />
      <div className="flex gap-1">
        <TaskButton icon={<WaveIcon />} label="9492257: Alpari Limited ..." />
        <TaskButton icon={<TerminalLogo />} label="2811223: MetaTrader - ..." />
        <TaskButton icon={<WaveIcon dark />} label="6851854: Alpari Limited ..." />
        <TaskButton icon={<FolderIcon />} label="C:\Program Files\MetaTr..." />
        <TaskButton icon={<TerminalLogo />} label="2756347: MetaTrader - ..." />
        <button
          type="button"
          aria-pressed="true"
          className={`flex h-[22px] w-[159px] shrink-0 items-center gap-[3px] border border-t-[#424142] border-r-white border-b-white border-l-[#424142] pl-1 font-bold whitespace-nowrap ${CHECKER}`}
        >
          <WindowIcon />
          Ultrabot - License not...
        </button>
      </div>
      <span className="ml-auto h-5 w-[3px] border-r border-[#848284] bg-white" />
      <span className="mr-[3px] ml-1.5 h-4 w-[15px] bg-[#08246b] text-center text-[10px] leading-4 text-white">RU</span>
      <time className="h-[22px] w-11 border border-t-[#848284] border-r-white border-b-white border-l-[#848284] text-center leading-5">17:18</time>
    </div>
  );
}

export default function App() {
  return (
    <div className="relative flex h-screen flex-col overflow-hidden bg-[#d6d3ce] font-['DejaVu_Sans_Condensed','DejaVu_Sans',sans-serif] text-[11px] leading-[13px] text-black">
      <TitleBar />
      <MenuBar />
      <Toolbars />
      <main className="flex min-h-0 flex-1">
        <MarketWatch />
        <div className="relative mr-px min-w-0 flex-1 border border-t-[#424142] border-r-white border-b-[#848284] border-l-[#424142] bg-[#848284]">
          <Navigator />
        </div>
      </main>
      <Terminal />
      <StatusBar />
      <Taskbar />
      <LicenseDialog />
    </div>
  );
}
